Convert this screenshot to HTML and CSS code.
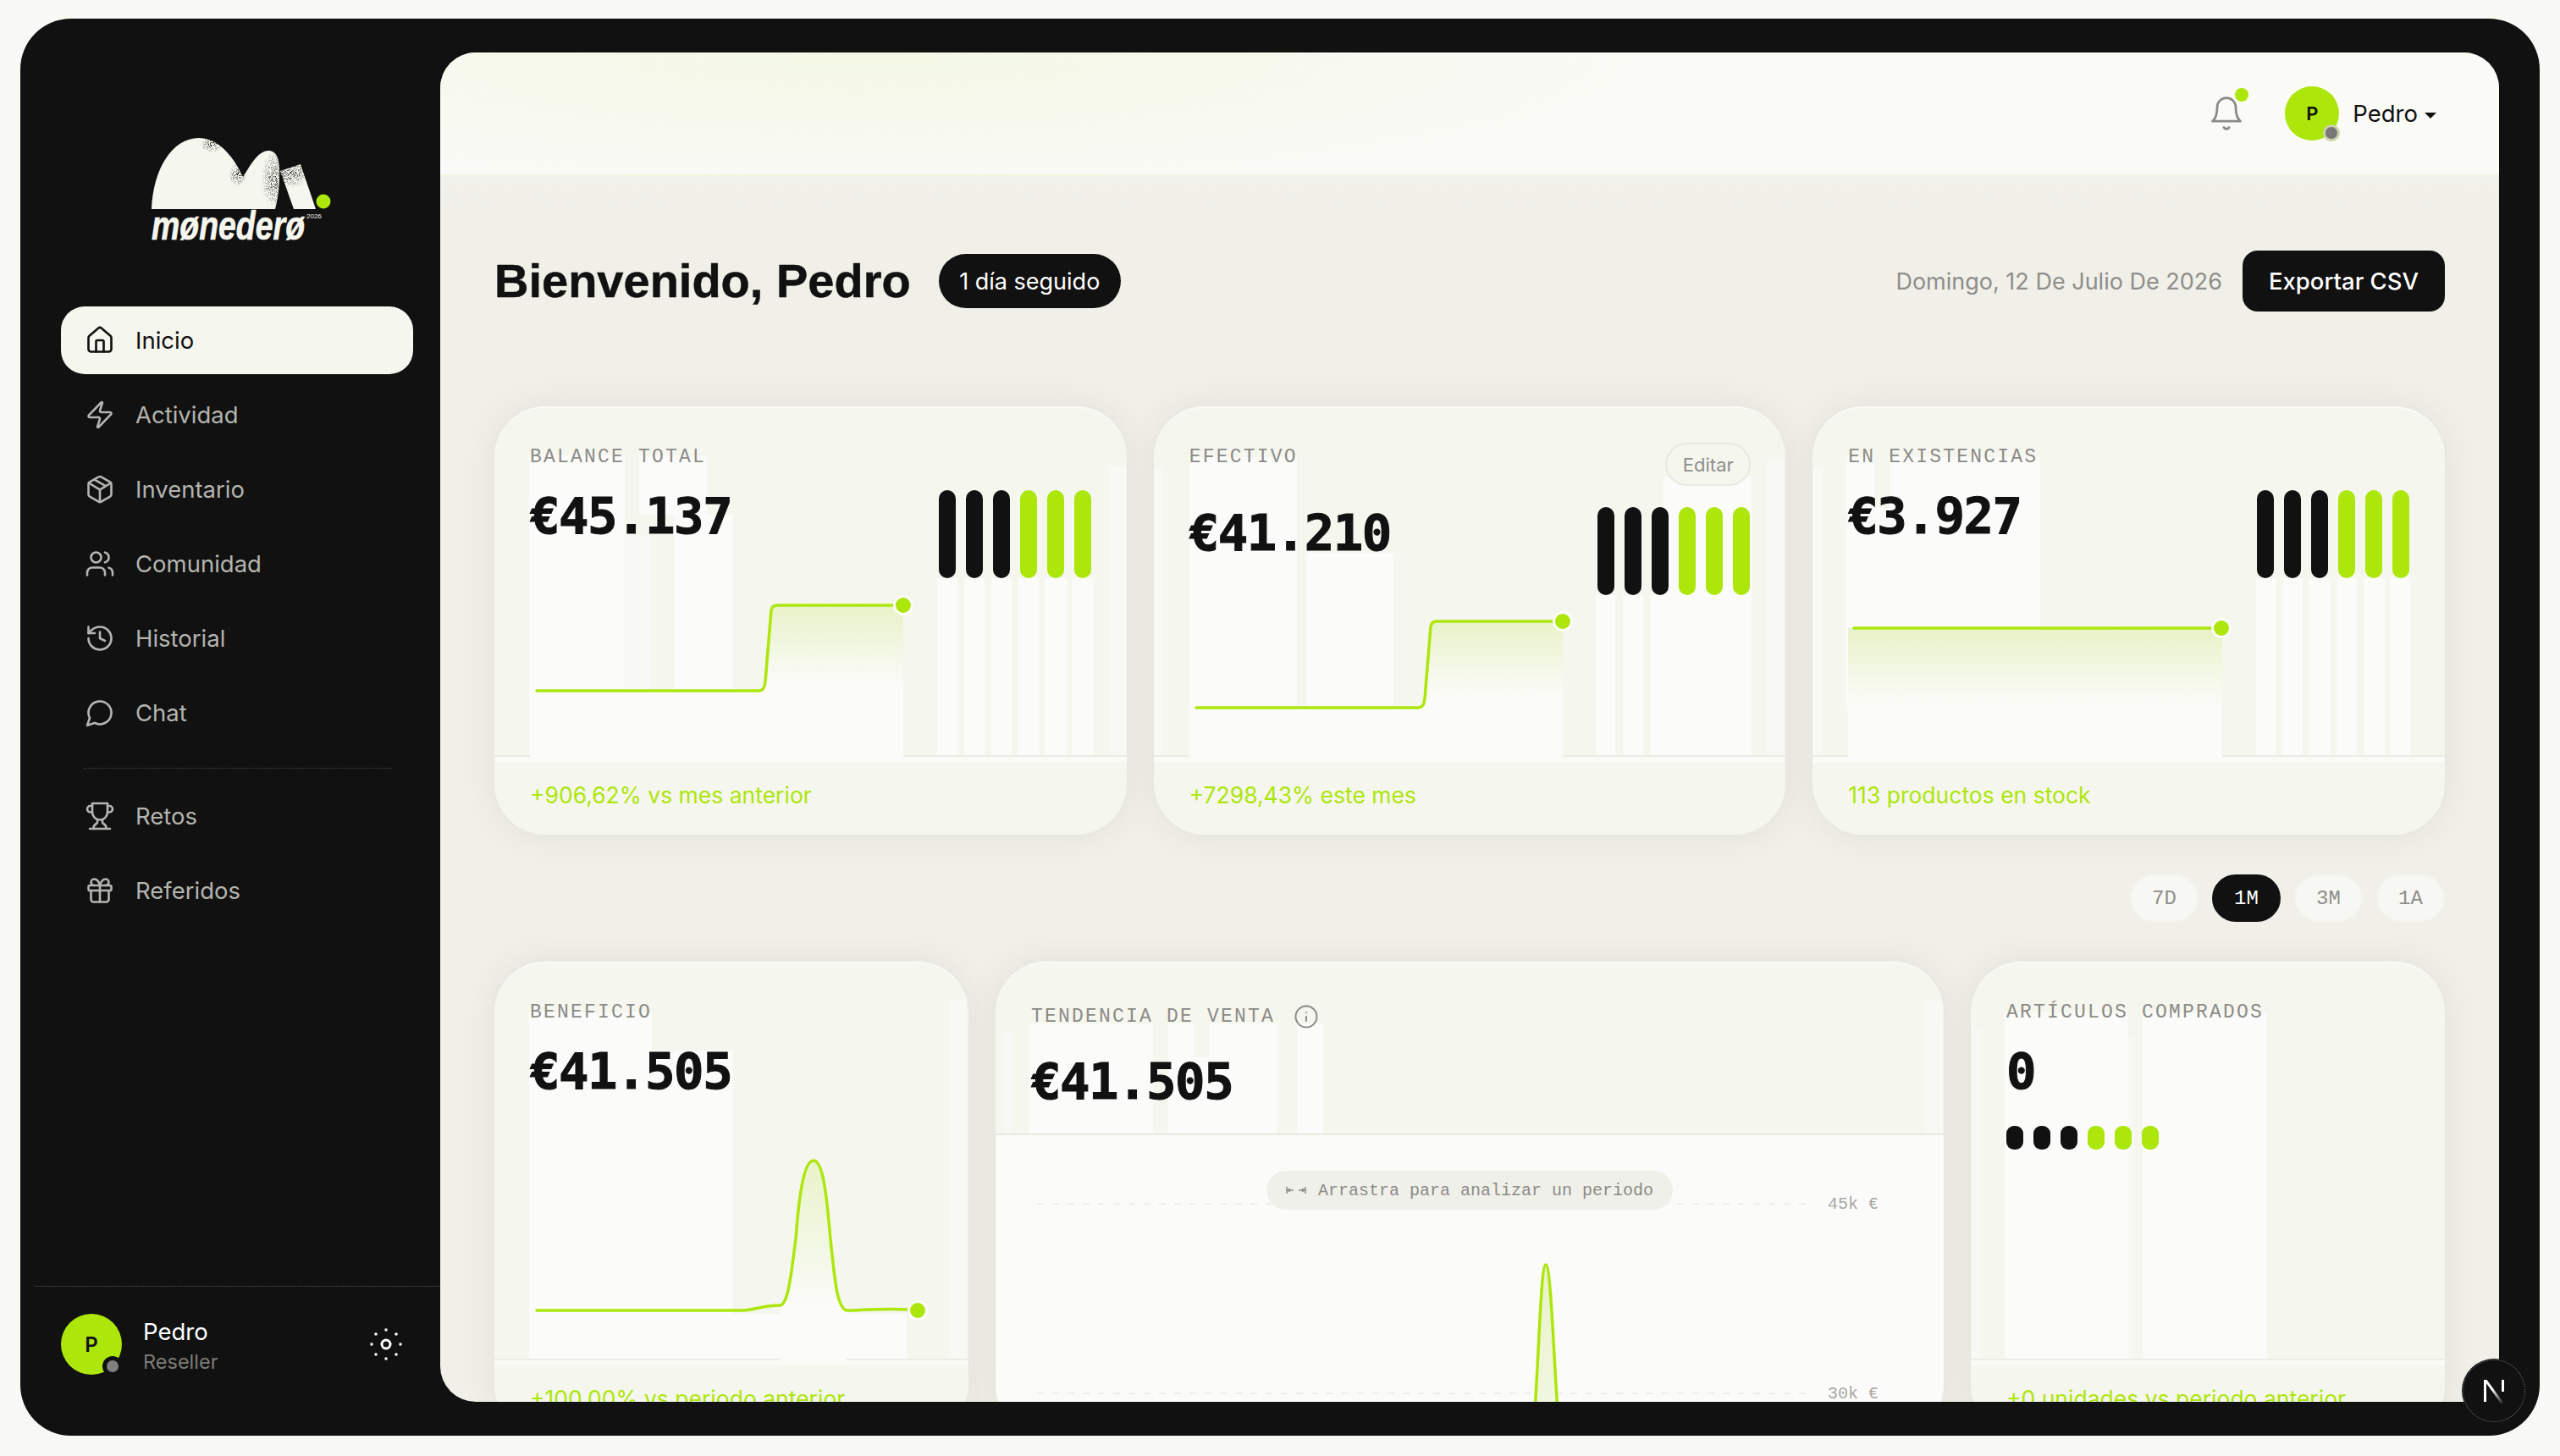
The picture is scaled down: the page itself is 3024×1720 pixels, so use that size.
FILE: index.html
```html
<!DOCTYPE html>
<html lang="es">
<head>
<meta charset="utf-8">
<title>Monedero</title>
<link rel="stylesheet" href="styles.css">
</head>
<body>
<div class="frame">
  <aside class="sidebar">
    <svg class="logo" viewBox="0 0 214 130" width="214" height="130">
      <defs>
        <filter id="grain" x="0" y="0" width="100%" height="100%"><feTurbulence type="fractalNoise" baseFrequency="1.15" numOctaves="2" seed="4" result="n"/><feColorMatrix in="n" type="matrix" values="0 0 0 0 0 0 0 0 0 0 0 0 0 0 0 0 0 0 7 -3.4" result="a"/><feComposite in="SourceGraphic" in2="a" operator="in"/></filter>
        <radialGradient id="gr"><stop offset="0" stop-color="#111" stop-opacity="1"/><stop offset="1" stop-color="#111" stop-opacity="0"/></radialGradient>
      </defs>
      <path class="logo-w" d="M1 87C3 40 25 3 57 3C80 3 98 25 109 49C118 35 127 18 139 18C150 18 153 30 152 50C152 65 149 80 147 87Z"/>
      <polygon class="logo-w" points="153,42 177,34 195,87 169,87"/>
      <g filter="url(#grain)">
        <ellipse cx="72" cy="11" rx="13" ry="9" fill="url(#gr)"/>
        <ellipse cx="103" cy="46" rx="11" ry="14" fill="url(#gr)"/>
        <ellipse cx="147" cy="52" rx="17" ry="34" fill="url(#gr)"/>
        <ellipse cx="167" cy="44" rx="20" ry="18" fill="url(#gr)"/>
      </g>
      <circle class="logo-dot" cx="204" cy="78" r="8.5"/>
      <text class="logo-word" x="1" y="123" textLength="181" lengthAdjust="spacingAndGlyphs">mønederø</text>
      <text class="logo-year" x="184" y="98">2026</text>
    </svg>
    <nav class="nav">
      <a class="nav-item active"><svg class="ic" viewBox="0 0 24 24"><path d="M15 21v-8a1 1 0 0 0-1-1h-4a1 1 0 0 0-1 1v8"/><path d="M3 10a2 2 0 0 1 .709-1.528l7-5.999a2 2 0 0 1 2.582 0l7 5.999A2 2 0 0 1 21 10v9a2 2 0 0 1-2 2H5a2 2 0 0 1-2-2z"/></svg>Inicio</a>
      <a class="nav-item"><svg class="ic" viewBox="0 0 24 24"><path d="M4 14a1 1 0 0 1-.78-1.63l9.9-10.2a.5.5 0 0 1 .86.46l-1.92 6.02A1 1 0 0 0 13 10h7a1 1 0 0 1 .78 1.63l-9.9 10.2a.5.5 0 0 1-.86-.46l1.92-6.02A1 1 0 0 0 11 14z"/></svg>Actividad</a>
      <a class="nav-item"><svg class="ic" viewBox="0 0 24 24"><path d="M11 21.73a2 2 0 0 0 2 0l7-4A2 2 0 0 0 21 16V8a2 2 0 0 0-1-1.73l-7-4a2 2 0 0 0-2 0l-7 4A2 2 0 0 0 3 8v8a2 2 0 0 0 1 1.73z"/><path d="M12 22V12"/><path d="m3.3 7 7.703 4.734a2 2 0 0 0 1.994 0L20.7 7"/><path d="m7.5 4.27 9 5.15"/></svg>Inventario</a>
      <a class="nav-item"><svg class="ic" viewBox="0 0 24 24"><path d="M16 21v-2a4 4 0 0 0-4-4H6a4 4 0 0 0-4 4v2"/><circle cx="9" cy="7" r="4"/><path d="M22 21v-2a4 4 0 0 0-3-3.87"/><path d="M16 3.13a4 4 0 0 1 0 7.75"/></svg>Comunidad</a>
      <a class="nav-item"><svg class="ic" viewBox="0 0 24 24"><path d="M3 12a9 9 0 1 0 9-9 9.75 9.75 0 0 0-6.74 2.74L3 8"/><path d="M3 3v5h5"/><path d="M12 7v5l4 2"/></svg>Historial</a>
      <a class="nav-item"><svg class="ic" viewBox="0 0 24 24"><path d="M7.9 20A9 9 0 1 0 4 16.1L2 22Z"/></svg>Chat</a>
      <div class="nav-sep"></div>
      <a class="nav-item"><svg class="ic" viewBox="0 0 24 24"><path d="M6 9H4.5a2.5 2.5 0 0 1 0-5H6"/><path d="M18 9h1.5a2.5 2.5 0 0 0 0-5H18"/><path d="M4 22h16"/><path d="M10 14.66V17c0 .55-.47.98-.97 1.21C7.85 18.75 7 20.24 7 22"/><path d="M14 14.66V17c0 .55.47.98.97 1.21C16.15 18.75 17 20.24 17 22"/><path d="M18 2H6v7a6 6 0 0 0 12 0V2Z"/></svg>Retos</a>
      <a class="nav-item"><svg class="ic" viewBox="0 0 24 24"><rect x="3" y="8" width="18" height="4" rx="1"/><path d="M12 8v13"/><path d="M19 12v7a2 2 0 0 1-2 2H7a2 2 0 0 1-2-2v-7"/><path d="M7.5 8a2.5 2.5 0 0 1 0-5A4.8 8 0 0 1 12 8a4.8 8 0 0 1 4.5-5 2.5 2.5 0 0 1 0 5"/></svg>Referidos</a>
    </nav>
    <div class="side-foot">
      <div class="avatar avatar-lg">P<span class="status status-dark"></span></div>
      <div class="side-user"><div class="side-name">Pedro</div><div class="side-role">Reseller</div></div>
      <svg class="sun" viewBox="0 0 40 40" width="40" height="40"><circle cx="20" cy="20" r="5" fill="none" stroke="#fff" stroke-width="3"/><g fill="#fff"><rect x="18.500" y="1.500" width="3" height="3"/><rect x="18.500" y="35.500" width="3" height="3"/><rect x="1.500" y="18.500" width="3" height="3"/><rect x="35.500" y="18.500" width="3" height="3"/><circle cx="8" cy="8" r="1.800"/><circle cx="32" cy="8" r="1.800"/><circle cx="8" cy="32" r="1.800"/><circle cx="32" cy="32" r="1.800"/></g></svg>
    </div>
  </aside>

  <main class="main">
    <header class="topbar">
      <div class="bell"><svg class="ic-bell" viewBox="0 0 24 24"><path d="M6 8a6 6 0 0 1 12 0c0 7 3 9 3 9H3s3-2 3-9"/><path d="M10.300 21a1.940 1.940 0 0 0 3.400 0"/></svg><span class="bell-dot"></span></div>
      <div class="avatar avatar-md">P<span class="status status-light"></span></div>
      <div class="top-name">Pedro<span class="caret"></span></div>
    </header>

    <div class="content">
      <section class="title-row">
        <h1 class="title">Bienvenido, Pedro</h1>
        <span class="streak">1 día seguido</span>
        <span class="date">Domingo, 12 De Julio De 2026</span>
        <button class="export">Exportar CSV</button>
      </section>

      <section class="grid-top">
        <article class="card">
          <div class="card-body c-balance">
            <div class="head"><div class="label">BALANCE TOTAL</div></div>
            <div class="kpi-row">
              <div class="value">€45.137</div>
              <div class="bars"><i class="bar k"></i><i class="bar k"></i><i class="bar k"></i><i class="bar g"></i><i class="bar g"></i><i class="bar g"></i></div>
            </div>
            <svg class="spark" viewBox="0 0 460 211" width="460" height="211">
              <defs><linearGradient id="a1" gradientUnits="userSpaceOnUse" x1="0" y1="32" x2="0" y2="125"><stop offset="0" stop-color="#e7f3c8"/><stop offset="1" stop-color="#fbfbf9"/></linearGradient></defs>
              <path fill="url(#a1)" d="M0 133H270C277 133 278 128 279 110L285 38Q286 32 292 32H441V211H0Z"/>
              <path class="line" d="M8 133H270C277 133 278 128 279 110L285 38Q286 32 292 32H441"/>
              <circle class="pt" cx="441" cy="32" r="10.500"/>
            </svg>
          </div>
          <div class="foot">+906,62% vs mes anterior</div>
        </article>

        <article class="card">
          <div class="card-body c-cash">
            <div class="head"><div class="label">EFECTIVO</div><button class="edit">Editar</button></div>
            <div class="kpi-row">
              <div class="value">€41.210</div>
              <div class="bars"><i class="bar k"></i><i class="bar k"></i><i class="bar k"></i><i class="bar g"></i><i class="bar g"></i><i class="bar g"></i></div>
            </div>
            <svg class="spark" viewBox="0 0 460 191" width="460" height="191">
              <defs><linearGradient id="a2" gradientUnits="userSpaceOnUse" x1="0" y1="31" x2="0" y2="120"><stop offset="0" stop-color="#e7f3c8"/><stop offset="1" stop-color="#fbfbf9"/></linearGradient></defs>
              <path fill="url(#a2)" d="M0 133H270C277 133 278 128 279 110L285 37Q286 31 292 31H441V191H0Z"/>
              <path class="line" d="M8 133H270C277 133 278 128 279 110L285 37Q286 31 292 31H441"/>
              <circle class="pt" cx="441" cy="31" r="10.500"/>
            </svg>
          </div>
          <div class="foot">+7298,43% este mes</div>
        </article>

        <article class="card">
          <div class="card-body c-stock">
            <div class="head"><div class="label">EN EXISTENCIAS</div></div>
            <div class="kpi-row">
              <div class="value">€3.927</div>
              <div class="bars"><i class="bar k"></i><i class="bar k"></i><i class="bar k"></i><i class="bar g"></i><i class="bar g"></i><i class="bar g"></i></div>
            </div>
            <svg class="spark" viewBox="0 0 460 211" width="460" height="211">
              <defs><linearGradient id="a3" gradientUnits="userSpaceOnUse" x1="0" y1="59" x2="0" y2="150"><stop offset="0" stop-color="#e7f3c8"/><stop offset="1" stop-color="#fbfbf9"/></linearGradient></defs>
              <path fill="url(#a3)" d="M0 59H442V211H0Z"/>
              <path class="line" d="M7 59H441"/>
              <circle class="pt" cx="441" cy="59" r="10.500"/>
            </svg>
          </div>
          <div class="foot">113 productos en stock</div>
        </article>
      </section>

      <div class="periods">
        <span class="period">7D</span><span class="period on">1M</span><span class="period">3M</span><span class="period">1A</span>
      </div>

      <section class="grid-bottom">
        <article class="card">
          <div class="card-body tall c-profit">
            <div class="head"><div class="label">BENEFICIO</div></div>
            <div class="kpi-row short"><div class="value">€41.505</div></div>
            <svg class="spark spark-low" viewBox="0 0 480 268" width="480" height="268">
              <defs><linearGradient id="a4" gradientUnits="userSpaceOnUse" x1="0" y1="32" x2="0" y2="205"><stop offset="0" stop-color="#e7f3c8"/><stop offset="1" stop-color="#fbfbf9"/></linearGradient></defs>
              <path fill="url(#a4)" d="M296 203C306 200 309 160 314 125C318 70 324 32 335 32C347 32 351 80 355 125C360 170 362 205 374 209V268H296Z"/>
              <path class="line" d="M8 209H252C268 208 275 203 296 203C306 200 309 160 314 125C318 70 324 32 335 32C347 32 351 80 355 125C360 170 362 205 374 209C390 209 420 206 444 208L458 209"/>
              <circle class="pt" cx="458" cy="209" r="10.500"/>
            </svg>
          </div>
          <div class="foot">+100,00% vs periodo anterior</div>
        </article>

        <article class="card">
          <div class="trend-top">
            <div class="trend-head"><div class="label">TENDENCIA DE VENTA</div><svg class="ic-info" viewBox="0 0 24 24"><circle cx="12" cy="12" r="10"/><path d="M12 16v-4"/><path d="M12 8h.01"/></svg></div>
            <div class="value trend-value">€41.505</div>
          </div>
          <div class="trend-plot">
            <div class="grid-line"><span class="dash"></span><span class="axis">45k €</span></div>
            <div class="grid-line"><span class="dash"></span><span class="axis">30k €</span></div>
            <div class="drag"><svg class="ic-drag" viewBox="0 0 24 10"><path d="M1 1v8M1 5h8M5 3L2 5l3 2M23 1v8M23 5h-8M19 3l3 2-3 2"/></svg>Arrastra para analizar un periodo</div>
            <svg class="spike" viewBox="0 0 100 180" width="100" height="180">
              <defs><linearGradient id="a5" x1="0" y1="0" x2="0" y2="1"><stop offset="0" stop-color="#e7f3c8"/><stop offset="1" stop-color="#f3f7e4"/></linearGradient></defs>
              <path fill="url(#a5)" d="M36 200C42 120 44 13 50 13C56 13 59 120 65 200Z"/>
              <path class="line" d="M36 200C42 120 44 13 50 13C56 13 59 120 65 200"/>
            </svg>
          </div>
        </article>

        <article class="card">
          <div class="card-body tall c-items">
            <div class="head"><div class="label">ARTÍCULOS COMPRADOS</div></div>
            <div class="kpi-row short"><div class="value">0</div></div>
            <div class="dots"><i class="dot k"></i><i class="dot k"></i><i class="dot k"></i><i class="dot g"></i><i class="dot g"></i><i class="dot g"></i></div>
          </div>
          <div class="foot">+0 unidades vs periodo anterior</div>
        </article>
      </section>
    </div>
  </main>
</div>
<div class="next-badge"><svg viewBox="0 0 40 40" width="40" height="40"><defs><linearGradient id="nx" x1="0" y1="0" x2="1" y2="1"><stop offset="0.4" stop-color="#fff"/><stop offset="1" stop-color="#fff" stop-opacity="0"/></linearGradient></defs><path fill="#fff" d="M8 7h3v26H8zM29 7h3v14h-3z"/><path fill="url(#nx)" d="M8 7h3.600L32 35h-3.800z"/></svg></div>
</body>
</html>
```
FILE: styles.css
```css
:root{
  --lime:#ade60b;
  --ink:#111111;
  --card:#f5f6ee;
  --w:#fbfbf9;
  --w2:#f8f9f4;
}
*{box-sizing:border-box}
html,body{margin:0;height:100%}
body{
  width:3024px;height:1720px;overflow:hidden;position:relative;
  background:#f8f8f4;padding:22px 24px 24px;
  font-family:"Inter","Liberation Sans",sans-serif;color:var(--ink);
}
.frame{display:flex;width:2976px;height:1674px;background:var(--ink);border-radius:60px;overflow:hidden}

/* sidebar */
.sidebar{width:496px;flex:none;display:flex;flex-direction:column;padding-top:138px}
.logo{margin:0 0 72px 154px;display:block;flex:none}
.logo-w{fill:#f5f6ee}
.logo-dot{fill:var(--lime)}
.logo-word{fill:#f5f6ee;stroke:#f5f6ee;stroke-width:.7;font-family:"Liberation Sans",sans-serif;font-weight:700;font-style:italic;font-size:48px}
.logo-year{fill:#f5f6ee;font-family:"Liberation Sans",sans-serif;font-size:8px}
.nav{display:flex;flex-direction:column;gap:8px;padding:0 32px 0 48px}
.nav-item{height:80px;border-radius:28px;display:flex;align-items:center;gap:24px;padding-left:28px;font-size:27.5px;color:#b4b4b0;font-weight:400}
.nav-item.active{background:var(--card);color:var(--ink)}
.ic{width:36px;height:36px;flex:none;fill:none;stroke:currentColor;stroke-width:1.75;stroke-linecap:round;stroke-linejoin:round}
.nav-sep{height:0;border-top:1px dotted #444;margin:17px 0 8px 27px;width:364px}
.side-foot{margin:auto 0 0 18px;height:177px;border-top:1px dotted #555;display:flex;align-items:flex-start;padding:32px 44px 0 30px}
.avatar{position:relative;border-radius:50%;background:var(--lime);display:flex;align-items:center;justify-content:center;font-weight:600;color:var(--ink);flex:none}
.avatar-lg{width:72px;height:72px;font-size:24px}
.avatar-md{width:64px;height:64px;font-size:22px}
.status{position:absolute;border-radius:50%;background:#808080}
.status-dark{right:-1px;bottom:-2px;background:#808080;border:5px solid var(--ink);box-sizing:content-box;width:14px;height:14px}
.status-light{width:14px;height:14px;right:-1px;bottom:-1px;box-sizing:content-box;border:3px solid #c9d2a8;background:#777}
.side-user{margin-left:25px;flex:1;padding-top:2px}
.side-name{font-size:27.5px;line-height:38px;color:#fff}
.side-role{font-size:23.5px;line-height:34px;color:#7b7b78}
.sun{margin-top:16px}

/* main */
.main{flex:1;margin:40px 48px 40px 0;border-radius:42px;background:linear-gradient(#f3f3ed,#f0f0e9 220px);overflow:hidden;min-width:0}
.topbar{
  height:146px;display:flex;align-items:center;justify-content:flex-end;padding-right:74px;
  background:radial-gradient(ellipse 1000px 170px at 500px 0,rgba(173,230,11,.08),rgba(173,230,11,0)),#fafaf7;
  border-bottom:2px solid #f1f5e2;
}
.bell{position:relative;width:44px;height:44px;margin-right:47px}
.ic-bell{width:44px;height:44px;fill:none;stroke:#8a8a86;stroke-width:1.5;stroke-linecap:round;stroke-linejoin:round;display:block}
.bell-dot{position:absolute;right:-4px;top:-8px;width:16px;height:16px;border-radius:50%;background:var(--lime)}
.top-name{font-size:27.5px;margin-left:16px;display:flex;align-items:center;gap:8px}
.caret{width:0;height:0;border-left:7px solid transparent;border-right:7px solid transparent;border-top:7px solid var(--ink);margin-top:4px}

.content{padding:88px 64px 0}
.title-row{display:flex;align-items:center;height:72px}
.title{margin:0;font-family:"Liberation Sans",sans-serif;font-size:56px;font-weight:700;letter-spacing:0;line-height:72px;-webkit-text-stroke:.5px var(--ink)}
.streak{margin-left:33px;height:64px;padding:0 24.500px;border-radius:32px;background:var(--ink);color:#fff;font-size:27px;display:flex;align-items:center}
.date{margin-left:auto;font-size:27px;color:#8e8e8a}
.export{margin-left:24px;height:72px;width:239px;border:0;border-radius:18px;background:var(--ink);color:#fff;font:500 27.5px "Inter","Liberation Sans",sans-serif}

.grid-top{display:grid;grid-template-columns:repeat(3,1fr);gap:32px;margin-top:112px}
.grid-bottom{display:grid;grid-template-columns:1fr 2fr 1fr;gap:32px;margin-top:47px}
.card{background:var(--card);border-radius:60px;overflow:hidden;box-shadow:0 0 40px rgba(80,80,60,.09);min-width:0;height:506px;border-top:2px solid #fafaf6}
.grid-bottom .card{height:560px}
.card-body{position:relative;height:412px;padding:0 42px;border-bottom:2px solid #ecece5;display:flex;flex-direction:column}
.card-body.tall{height:469px}
.card-body::before{content:"";position:absolute;left:0;top:-2px;right:0;bottom:0;pointer-events:none}
.card-body>*{position:relative}

/* ghost strips behind the card contents */
.c-balance::before{background:
  linear-gradient(var(--w),var(--w)) 41px 58px/113px 355px no-repeat,
  linear-gradient(var(--w2),var(--w2)) 154px 152px/31px 261px no-repeat,
  linear-gradient(var(--w),var(--w)) 171px 58px/80px 70px no-repeat,
  linear-gradient(var(--w),var(--w)) 212px 128px/70px 285px no-repeat,
  linear-gradient(var(--w),var(--w)) 523px 203px/24px 210px no-repeat,
  linear-gradient(var(--w),var(--w)) 555px 203px/24px 210px no-repeat,
  linear-gradient(var(--w),var(--w)) 587px 203px/24px 210px no-repeat,
  linear-gradient(var(--w),var(--w)) 618px 203px/26px 210px no-repeat,
  linear-gradient(var(--w),var(--w)) 650px 203px/26px 210px no-repeat,
  linear-gradient(var(--w),var(--w)) 682px 203px/26px 210px no-repeat,
  linear-gradient(var(--w2),var(--w2)) 726px 70px/20px 343px no-repeat;
}
.c-cash::before{background:
  linear-gradient(var(--w),var(--w)) 43px 60px/126px 353px no-repeat,
  linear-gradient(var(--w),var(--w)) 180px 173px/103px 240px no-repeat,
  linear-gradient(var(--w2),var(--w2)) 0 73px/10px 340px no-repeat,
  linear-gradient(var(--w),var(--w)) 522px 223px/23px 190px no-repeat,
  linear-gradient(var(--w),var(--w)) 554px 223px/24px 190px no-repeat,
  linear-gradient(var(--w),var(--w)) 586px 223px/120px 190px no-repeat,
  linear-gradient(var(--w),var(--w)) 602px 83px/104px 140px no-repeat,
  linear-gradient(var(--w2),var(--w2)) 724px 65px/20px 348px no-repeat;
}
.c-stock::before{background:
  linear-gradient(var(--w),var(--w)) 40px 60px/33px 300px no-repeat,
  linear-gradient(var(--w),var(--w)) 91px 60px/178px 300px no-repeat,
  linear-gradient(var(--w),var(--w)) 40px 120px/229px 240px no-repeat,
  linear-gradient(var(--w2),var(--w2)) 0 73px/12px 340px no-repeat,
  linear-gradient(var(--w),var(--w)) 524px 203px/24px 210px no-repeat,
  linear-gradient(var(--w),var(--w)) 555px 203px/24px 210px no-repeat,
  linear-gradient(var(--w),var(--w)) 587px 203px/24px 210px no-repeat,
  linear-gradient(var(--w),var(--w)) 619px 203px/24px 210px no-repeat,
  linear-gradient(var(--w),var(--w)) 651px 203px/25px 210px no-repeat,
  linear-gradient(var(--w),var(--w)) 682px 203px/24px 210px no-repeat;
}
.c-profit::before{background:
  linear-gradient(var(--w),var(--w)) 41px 60px/145px 411px no-repeat,
  linear-gradient(var(--w),var(--w)) 186px 105px/96px 366px no-repeat,
  linear-gradient(var(--w),var(--w)) 282px 416px/204px 55px no-repeat,
  linear-gradient(var(--w2),var(--w2)) 537px 44px/20px 427px no-repeat;
}
.c-items::before{background:
  linear-gradient(var(--w),var(--w)) 40px 60px/146px 411px no-repeat,
  linear-gradient(var(--w2),var(--w2)) 186px 90px/6px 381px no-repeat,
  linear-gradient(var(--w),var(--w)) 203px 60px/146px 411px no-repeat,
  linear-gradient(var(--w2),var(--w2)) 2px 80px/9px 391px no-repeat;
}

.head{display:flex;justify-content:space-between;align-items:flex-start;padding-top:41px}
.label{margin-top:4px;margin-bottom:-1px;font-family:"Liberation Mono",monospace;font-size:23px;line-height:26px;letter-spacing:2.2px;color:#8b8b87;white-space:nowrap}
.edit{height:51px;width:101px;margin-bottom:-2px;margin-right:-1px;border:2px solid #e9e9e2;border-radius:26px;background:#f5f6ee;font:400 22px "Inter","Liberation Sans",sans-serif;color:#8f8f8b;padding:0}
.kpi-row{display:flex;justify-content:space-between;align-items:flex-start;margin-top:27px;height:104px;flex:none}
.kpi-row.short{height:62px}
.value{font-family:"DejaVu Sans Mono",monospace;font-weight:700;font-size:59px;line-height:62px;letter-spacing:-1.5px;color:var(--ink);white-space:nowrap;-webkit-text-stroke:1px var(--ink)}
.bars{display:flex;gap:12px}
.bar{display:block;width:20px;height:104px;border-radius:10px}
.bar.k,.dot.k{background:var(--ink)}
.bar.g,.dot.g{background:var(--lime)}
.spark{display:block;overflow:visible;flex:none}
.spark-low{margin-top:42px}
.line{fill:none;stroke:var(--lime);stroke-width:3.5;stroke-linecap:round;stroke-linejoin:round}
.pt{fill:var(--lime);stroke:#fbfbf9;stroke-width:3}
.dots{display:flex;gap:12px;margin-top:33px}
.dot{display:block;width:20px;height:28px;border-radius:9px}
.foot{border-top:6px solid #fafaf7;padding:23px 42px 0;font-size:26.5px;line-height:32px;color:var(--lime);white-space:nowrap}

.periods{display:flex;justify-content:flex-end;gap:16px;margin-top:47px}
.period{width:81px;height:56px;border-radius:28px;display:flex;align-items:center;justify-content:center;background:#f7f7f3;border:2px solid #f4f4ef;font-family:"Liberation Mono",monospace;font-size:24px;color:#8e8e8a}
.period.on{background:var(--ink);color:#fff;border-color:var(--ink)}

.trend-top{height:203px;padding:50px 42px 0;border-bottom:2px solid #e9e9e1;background:
  linear-gradient(var(--w),var(--w)) 40px 71px/146px 130px no-repeat,
  linear-gradient(var(--w),var(--w)) 204px 71px/30px 130px no-repeat,
  linear-gradient(var(--w),var(--w)) 252px 71px/81px 130px no-repeat,
  linear-gradient(var(--w),var(--w)) 204px 111px/129px 90px no-repeat,
  linear-gradient(var(--w),var(--w)) 356px 71px/31px 130px no-repeat,
  linear-gradient(var(--w2),var(--w2)) 10px 80px/10px 121px no-repeat,
  linear-gradient(var(--w2),var(--w2)) 1097px 42px/22px 159px no-repeat;
}
.trend-head{display:flex;align-items:center;gap:22px;height:26px}
.trend-head .label{margin:0}
.ic-info{width:30px;height:30px;fill:none;stroke:#8b8b87;stroke-width:1.6;stroke-linecap:round}
.trend-value{margin-top:33px}
.trend-plot{position:relative;height:360px;background:var(--w);padding:65px 0 0 49px}
.grid-line{display:flex;align-items:center;gap:24px;height:32px;margin-bottom:192px;padding-right:77px}
.dash{flex:1;height:2px;background:repeating-linear-gradient(90deg,#eeeee8 0 8px,transparent 8px 18px)}
.axis{font-family:"Liberation Mono",monospace;font-size:20px;color:#a8a8a4;white-space:nowrap}
.drag{position:absolute;left:50%;top:42px;transform:translateX(-50%);width:480px;height:46px;border-radius:23px;background:#f0f0ea;display:flex;align-items:center;justify-content:center;gap:14px;font-family:"Liberation Mono",monospace;font-size:20px;color:#8b8b87;white-space:nowrap}
.ic-drag{width:24px;height:10px;fill:none;stroke:#8b8b87;stroke-width:1.5}
.spike{position:absolute;left:600px;top:140px;overflow:hidden}

.next-badge{position:absolute;right:41px;bottom:40px;width:74px;height:74px;border-radius:50%;background:#111;border:1px dotted #777;box-shadow:0 0 0 1px #111;display:flex;align-items:center;justify-content:center}
```
